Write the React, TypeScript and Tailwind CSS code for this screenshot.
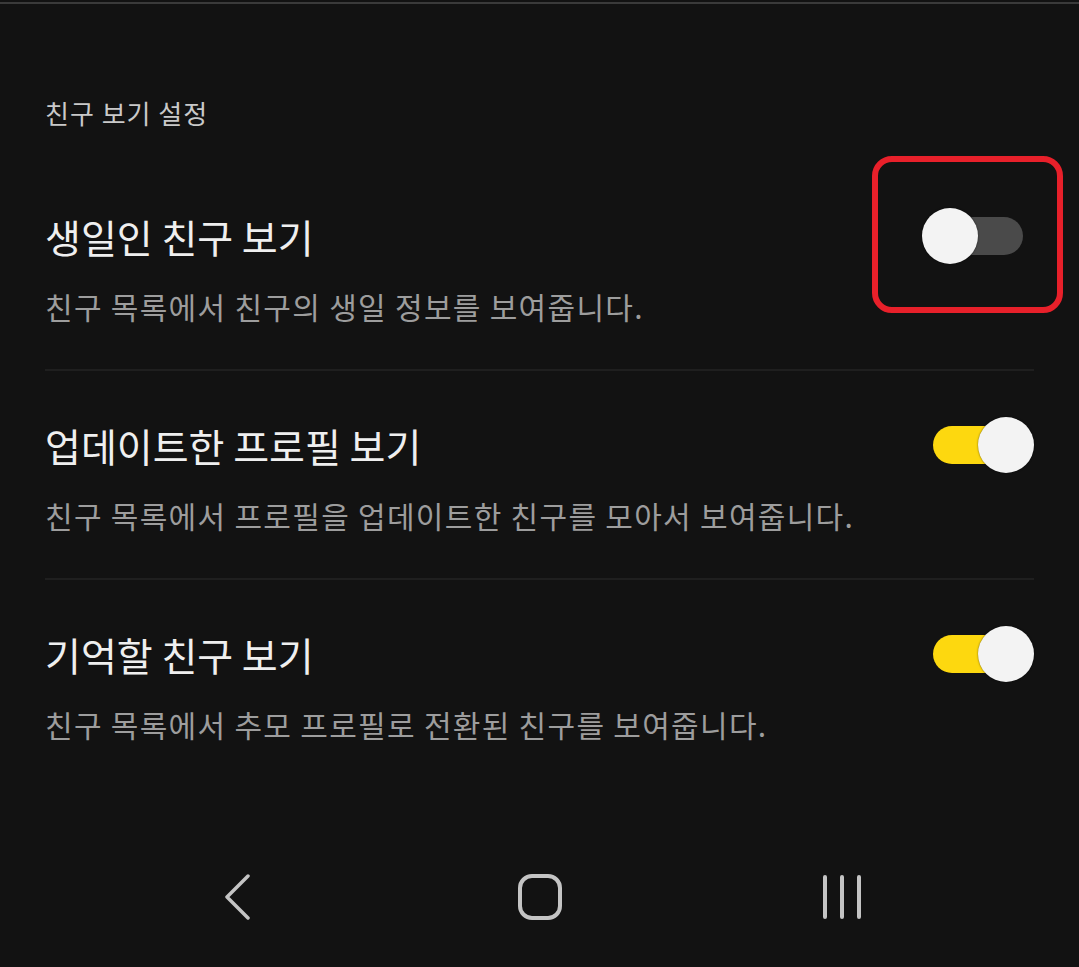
import React from 'react';

type Item = { title: string; desc: string; on: boolean; marked?: boolean };

const items: Item[] = [
  { title: '생일인 친구 보기', desc: '친구 목록에서 친구의 생일 정보를 보여줍니다.', on: false, marked: true },
  { title: '업데이트한 프로필 보기', desc: '친구 목록에서 프로필을 업데이트한 친구를 모아서 보여줍니다.', on: true },
  { title: '기억할 친구 보기', desc: '친구 목록에서 추모 프로필로 전환된 친구를 보여줍니다.', on: true },
];

const Toggle: React.FC<{ on: boolean; marked?: boolean }> = ({ on, marked }) => (
  <div className="relative w-[112px] h-[56px] shrink-0">
    <div
      className={
        'absolute left-[11px] right-[11px] top-[9px] h-[38px] rounded-full ' +
        (on ? 'bg-[#fdd80f]' : 'bg-[#4a4a4a]')
      }
    />
    <div
      className={
        'absolute top-0 w-[56px] h-[56px] rounded-full bg-[#f3f3f3] shadow-[0_0_2px_rgba(0,0,0,0.6)] ' +
        (on ? 'left-[56px]' : 'left-0')
      }
    />
    {marked && (
      <div className="absolute left-[-50px] top-[-52px] w-[191px] h-[157px] rounded-[20px] border-[6px] border-[#e8202a]" />
    )}
  </div>
);

export default function App() {
  return (
    <div
      className="h-[967px] w-full bg-[#121212] flex flex-col"
      style={{ fontFamily: '"Noto Sans CJK KR", "Noto Sans", sans-serif' }}
    >
      {/* status edge */}
      <div className="pt-[2px]">
        <div className="h-[2px] bg-[#3a3a3a]" />
      </div>

      <div className="px-[45px] flex-1">
        <div className="mt-[93px] mb-[33px] h-[32px] leading-[32px] text-[26px] tracking-[1px] text-[#c9c9c9]">
          친구 보기 설정
        </div>

        {items.map((it, i) => (
          <div
            key={i}
            className={'pt-[50px] pb-[43px] ' + (i < items.length - 1 ? 'border-b-2 border-[#1f1f1f]' : '')}
          >
            <div className="flex items-center justify-between h-[48px]">
              <div className="text-[39px] leading-[48px] text-[#efefef]">{it.title}</div>
              <Toggle on={it.on} marked={it.marked} />
            </div>
            <div className="mt-[26px] h-[40px] leading-[40px] text-[30px] tracking-[1.3px] text-[#9d9d9d]">
              {it.desc}
            </div>
          </div>
        ))}
      </div>

      {/* nav bar */}
      <div className="h-[140px] flex items-center justify-center">
        <div className="w-[302px] flex justify-center">
          <svg width="28" height="46" viewBox="0 0 28 46" fill="none">
            <path d="M24 2 L3 23 L24 44" stroke="#c4c4c4" strokeWidth="3.5" strokeLinecap="round" strokeLinejoin="round" />
          </svg>
        </div>
        <div className="w-[302px] flex justify-center">
          <svg width="44" height="46" viewBox="0 0 44 46" fill="none">
            <rect x="2" y="2" width="40" height="42" rx="12" stroke="#c4c4c4" strokeWidth="4" />
          </svg>
        </div>
        <div className="w-[302px] flex justify-center">
          <svg width="40" height="46" viewBox="0 0 40 46" fill="none">
            <path d="M3 3 V43 M20 3 V43 M37 3 V43" stroke="#c4c4c4" strokeWidth="4" strokeLinecap="round" />
          </svg>
        </div>
      </div>
    </div>
  );
}
